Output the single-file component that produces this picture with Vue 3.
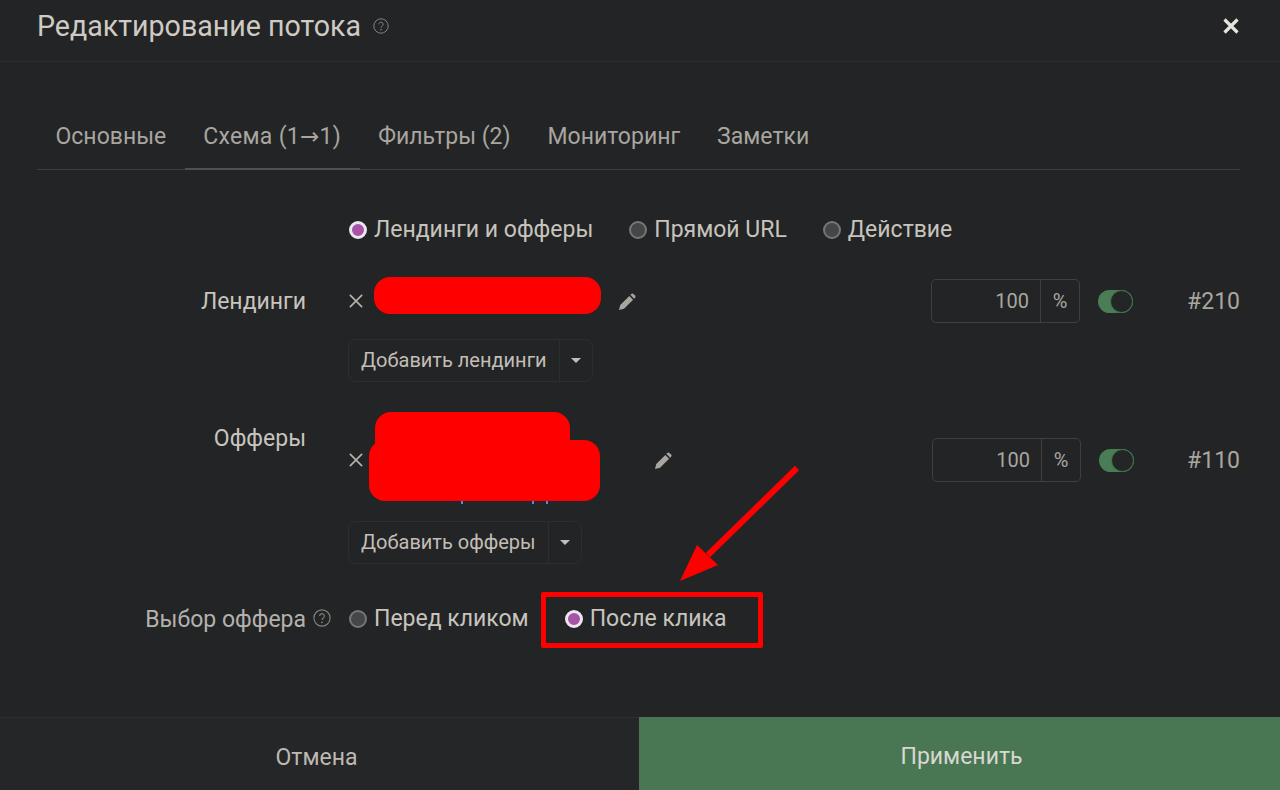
<script setup>
const tabs = [
  { label: 'Основные' },
  { label: 'Схема (1→1)', active: true },
  { label: 'Фильтры (2)' },
  { label: 'Мониторинг' },
  { label: 'Заметки' }
]
const schemaTypes = [
  { label: 'Лендинги и офферы', checked: true },
  { label: 'Прямой URL' },
  { label: 'Действие' }
]
const offerModes = [
  { label: 'Перед кликом' },
  { label: 'После клика', checked: true }
]
</script>

<template>
  <div class="modal">
    <header class="head">
      <h1 class="title">Редактирование потока</h1>
      <svg class="help help-title" viewBox="0 0 16 16">
        <circle cx="8" cy="8" r="7.2" />
        <path d="M5.9 6.3a2.1 2.1 0 1 1 3.3 1.7c-.8.5-1.2 1-1.2 1.8" />
        <circle class="dot" cx="8" cy="11.8" r=".8" />
      </svg>
      <svg class="close" viewBox="0 0 16 16"><path d="M1.5 1.5l13 13M14.5 1.5l-13 13" /></svg>
    </header>

    <nav class="tabs">
      <div v-for="t in tabs" :key="t.label" class="tab" :class="{ active: t.active }">{{ t.label }}</div>
    </nav>

    <section class="form">
      <div class="row row-type">
        <div class="label"></div>
        <div class="radios">
          <label v-for="r in schemaTypes" :key="r.label" class="radio">
            <i class="mark" :class="{ on: r.checked }"></i>{{ r.label }}
          </label>
        </div>
      </div>

      <div class="row row-landing">
        <div class="label label-landing">Лендинги</div>
        <div class="body">
          <div class="item item-landing">
            <svg class="remove" viewBox="0 0 16 16"><path d="M1 1l14 14M15 1L1 15" /></svg>
            <div class="name name-landing"></div>
            <svg class="pencil" viewBox="0 0 20 20">
              <path d="M1 19l1.4-5.4L11.9 4.1l4 4L6.4 17.6z" />
              <path d="M13 3l1-1a1.6 1.6 0 0 1 2.2 0l1.8 1.8a1.6 1.6 0 0 1 0 2.2l-1 1z" />
            </svg>
            <div class="share">
              <div class="percent"><span class="num">100</span><span class="unit">%</span></div>
              <div class="toggle"><i></i></div>
              <div class="id">#210</div>
            </div>
          </div>
          <div class="split split-landing">
            <span class="split-text">Добавить лендинги</span>
            <span class="split-caret"><i></i></span>
          </div>
        </div>
      </div>

      <div class="row row-offer">
        <div class="label label-offer">Офферы</div>
        <div class="body">
          <div class="item item-offer">
            <svg class="remove" viewBox="0 0 16 16"><path d="M1 1l14 14M15 1L1 15" /></svg>
            <div class="name name-offer">
              <span class="blot blot-a"></span>
              <span class="blot blot-b"></span>
              <span class="speck s1"></span>
              <span class="speck s2"></span>
              <span class="speck s3"></span>
            </div>
            <svg class="pencil" viewBox="0 0 20 20">
              <path d="M1 19l1.4-5.4L11.9 4.1l4 4L6.4 17.6z" />
              <path d="M13 3l1-1a1.6 1.6 0 0 1 2.2 0l1.8 1.8a1.6 1.6 0 0 1 0 2.2l-1 1z" />
            </svg>
            <div class="share share-offer">
              <div class="percent"><span class="num">100</span><span class="unit">%</span></div>
              <div class="toggle"><i></i></div>
              <div class="id">#110</div>
            </div>
          </div>
          <div class="split split-offer">
            <span class="split-text">Добавить офферы</span>
            <span class="split-caret"><i></i></span>
          </div>
        </div>
      </div>

      <div class="row row-mode">
        <div class="label label-mode">
          Выбор оффера
          <svg class="help help-mode" viewBox="0 0 16 16">
            <circle cx="8" cy="8" r="7.2" />
            <path d="M5.9 6.3a2.1 2.1 0 1 1 3.3 1.7c-.8.5-1.2 1-1.2 1.8" />
            <circle class="dot" cx="8" cy="11.8" r=".8" />
          </svg>
        </div>
        <div class="radios">
          <label v-for="r in offerModes" :key="r.label" class="radio">
            <i class="mark" :class="{ on: r.checked }"></i>{{ r.label }}
          </label>
        </div>
      </div>
    </section>

    <footer class="foot">
      <div class="btn cancel">Отмена</div>
      <div class="btn apply">Применить</div>
    </footer>

    <!-- пометки поверх скриншота -->
    <div class="callout"></div>
    <svg class="arrow" viewBox="0 0 1280 790">
      <path d="M797 468L708 555" />
      <polygon points="680,581 697,545 718,565" />
    </svg>
  </div>
</template>

<style>
html, body {
  margin: 0;
  background: #222426;
}
</style>

<style scoped>
.modal {
  position: relative;
  width: 1280px;
  height: 790px;
  overflow: hidden;
  display: flex;
  flex-direction: column;
  background: #222426;
  color: #c8c4bd;
  font-family: Roboto, "Noto Sans", sans-serif;
  font-size: 23px;
}

.head {
  flex: none;
  height: 52px;
  display: flex;
  align-items: center;
  padding: 0 40px 9px 37px;
  border-bottom: 1px solid #2a2c2e;
}
.title {
  margin: 0;
  font-size: 28.6px;
  font-weight: 400;
  color: #cfcbc4;
}
.help {
  fill: none;
  stroke: #85827d;
  stroke-width: 1;
}
.help .dot {
  fill: #85827d;
  stroke: none;
}
.help-title {
  width: 16px;
  height: 16px;
  margin-left: 12px;
  margin-top: -1px;
}
.close {
  width: 16px;
  height: 16px;
  margin-left: auto;
  margin-right: 1px;
  margin-top: -1px;
  fill: none;
  stroke: #e6e4e0;
  stroke-width: 3.2;
}

.tabs {
  display: flex;
  margin: 45px 40px 0 37px;
  height: 62px;
  border-bottom: 1px solid #3c3f41;
  font-family: Roboto, "DejaVu Sans", sans-serif;
}
.tab {
  padding: 0 18.5px;
  line-height: 59px;
  color: #a9a59f;
  height: 62px;
  box-sizing: border-box;
}
.tab.active {
  border-bottom: 2px solid #4c5153;
  height: 63px;
  letter-spacing: 0.3px;
}

.form {
  flex: 1;
  padding: 0 40px 0 37px;
}
.row {
  display: grid;
  grid-template-columns: 294px 1fr;
  column-gap: 17px;
}
.label {
  text-align: right;
  padding-right: 25px;
  color: #c8c4bd;
}
.row-type {
  margin-top: 45px;
  height: 30px;
  align-items: center;
}
.radios {
  display: flex;
  gap: 36px;
  margin-left: 1px;
}
.radio {
  display: flex;
  align-items: center;
  gap: 7px;
  line-height: 30px;
}
.mark {
  width: 18px;
  height: 18px;
  box-sizing: border-box;
  border-radius: 50%;
  border: 2px solid #77767a;
  background: #454648;
}
.mark.on {
  border: 3px solid #ece6ee;
  background: #a653a8;
}

.row-landing {
  margin-top: 34px;
}
.label-landing {
  line-height: 40px;
  margin-top: 3px;
}
.item {
  display: flex;
  align-items: center;
}
.item-landing {
  height: 44px;
}
.item-offer {
  height: 96px;
}
.remove {
  width: 14px;
  height: 14px;
  margin-left: 1px;
  margin-right: 11px;
  fill: none;
  stroke: #b5b1ab;
  stroke-width: 1.9;
  flex: none;
}
.name {
  position: relative;
  flex: none;
}
.name-landing {
  width: 227px;
  height: 37px;
  margin-top: -11px;
  background: #ff0000;
  border-radius: 16px;
}
.name-offer {
  align-self: flex-start;
  width: 231px;
  height: 92px;
}
.blot {
  position: absolute;
  background: #ff0000;
}
.blot-a {
  left: 1px;
  top: 0;
  width: 195px;
  height: 70px;
  border-radius: 16px;
}
.blot-b {
  left: -5px;
  top: 28px;
  width: 231px;
  height: 61px;
  border-radius: 16px;
}
.speck {
  position: absolute;
  top: 89px;
  width: 2px;
  height: 3px;
  background: #3f94d8;
}
.s1 { left: 87px; }
.s2 { left: 158px; }
.s3 { left: 172px; }
.pencil {
  width: 19px;
  height: 19px;
  fill: #a9a59f;
  flex: none;
}
.item-landing .pencil {
  margin-left: 17px;
}
.item-offer .pencil {
  margin-left: 49px;
}
.share {
  display: flex;
  align-items: center;
  margin-left: auto;
}
.percent {
  display: flex;
  width: 149px;
  height: 44px;
  box-sizing: border-box;
  border: 1px solid #3e4042;
  border-radius: 5px;
  font-size: 20px;
  line-height: 42px;
  color: #aaa69f;
}
.num {
  flex: 1;
  text-align: right;
  padding-right: 11px;
}
.unit {
  width: 38px;
  text-align: center;
  border-left: 1px solid #3e4042;
  font-size: 20px;
}
.toggle {
  position: relative;
  width: 35px;
  height: 23px;
  margin-left: 18px;
  box-sizing: border-box;
  border-radius: 12px;
  background: #4a7d55;
}
.toggle i {
  position: absolute;
  right: 0;
  top: 0;
  width: 23px;
  height: 23px;
  box-sizing: border-box;
  border-radius: 50%;
  border: 1px solid #3f7a49;
  background: #232527;
}
.id {
  width: 107px;
  text-align: right;
  color: #aaa69f;
}
.share-offer .id {
  width: 106px;
}
.split {
  display: inline-flex;
  height: 43px;
  box-sizing: border-box;
  border: 1px solid #2c2e30;
  border-radius: 8px;
  font-size: 20px;
  line-height: 41px;
  color: #c2beb7;
}
.split-landing {
  margin-top: 16px;
}
.split-offer {
  margin-top: 13px;
}
.split-text {
  padding: 0 12px;
}
.split-caret {
  width: 32px;
  display: flex;
  align-items: center;
  justify-content: center;
  border-left: 1px solid #2c2e30;
}
.split-caret i {
  width: 0;
  height: 0;
  border-left: 5px solid transparent;
  border-right: 5px solid transparent;
  border-top: 5px solid #c2beb7;
}

.row-offer {
  margin-top: 30px;
}
.label-offer {
  line-height: 54px;
}
.row-mode {
  margin-top: 40px;
  height: 30px;
  align-items: center;
}
.label-mode {
  position: relative;
  line-height: 30px;
  padding-right: 25px;
  top: 1px;
  color: #b5b1ab;
}
.help-mode {
  position: absolute;
  right: 0;
  top: 4px;
  width: 18px;
  height: 18px;
}

.foot {
  flex: none;
  height: 73px;
  display: flex;
}
.btn {
  display: flex;
  align-items: center;
  justify-content: center;
  line-height: 1;
  padding-top: 6px;
  box-sizing: border-box;
}
.cancel {
  width: 639px;
  padding-right: 6px;
  border-top: 1px solid #2c2e30;
  background: #242628;
  color: #bdb9b2;
}
.apply {
  flex: 1;
  padding-left: 4px;
  background: #4a7753;
  color: #d8d8d0;
}

.callout {
  position: absolute;
  left: 541px;
  top: 592px;
  width: 222px;
  height: 56px;
  box-sizing: border-box;
  border: 5px solid #ff0000;
  border-radius: 2px;
}
.arrow {
  position: absolute;
  left: 0;
  top: 0;
  width: 1280px;
  height: 790px;
  pointer-events: none;
}
.arrow path {
  stroke: #ff0000;
  stroke-width: 6;
  fill: none;
}
.arrow polygon {
  fill: #ff0000;
}
</style>
